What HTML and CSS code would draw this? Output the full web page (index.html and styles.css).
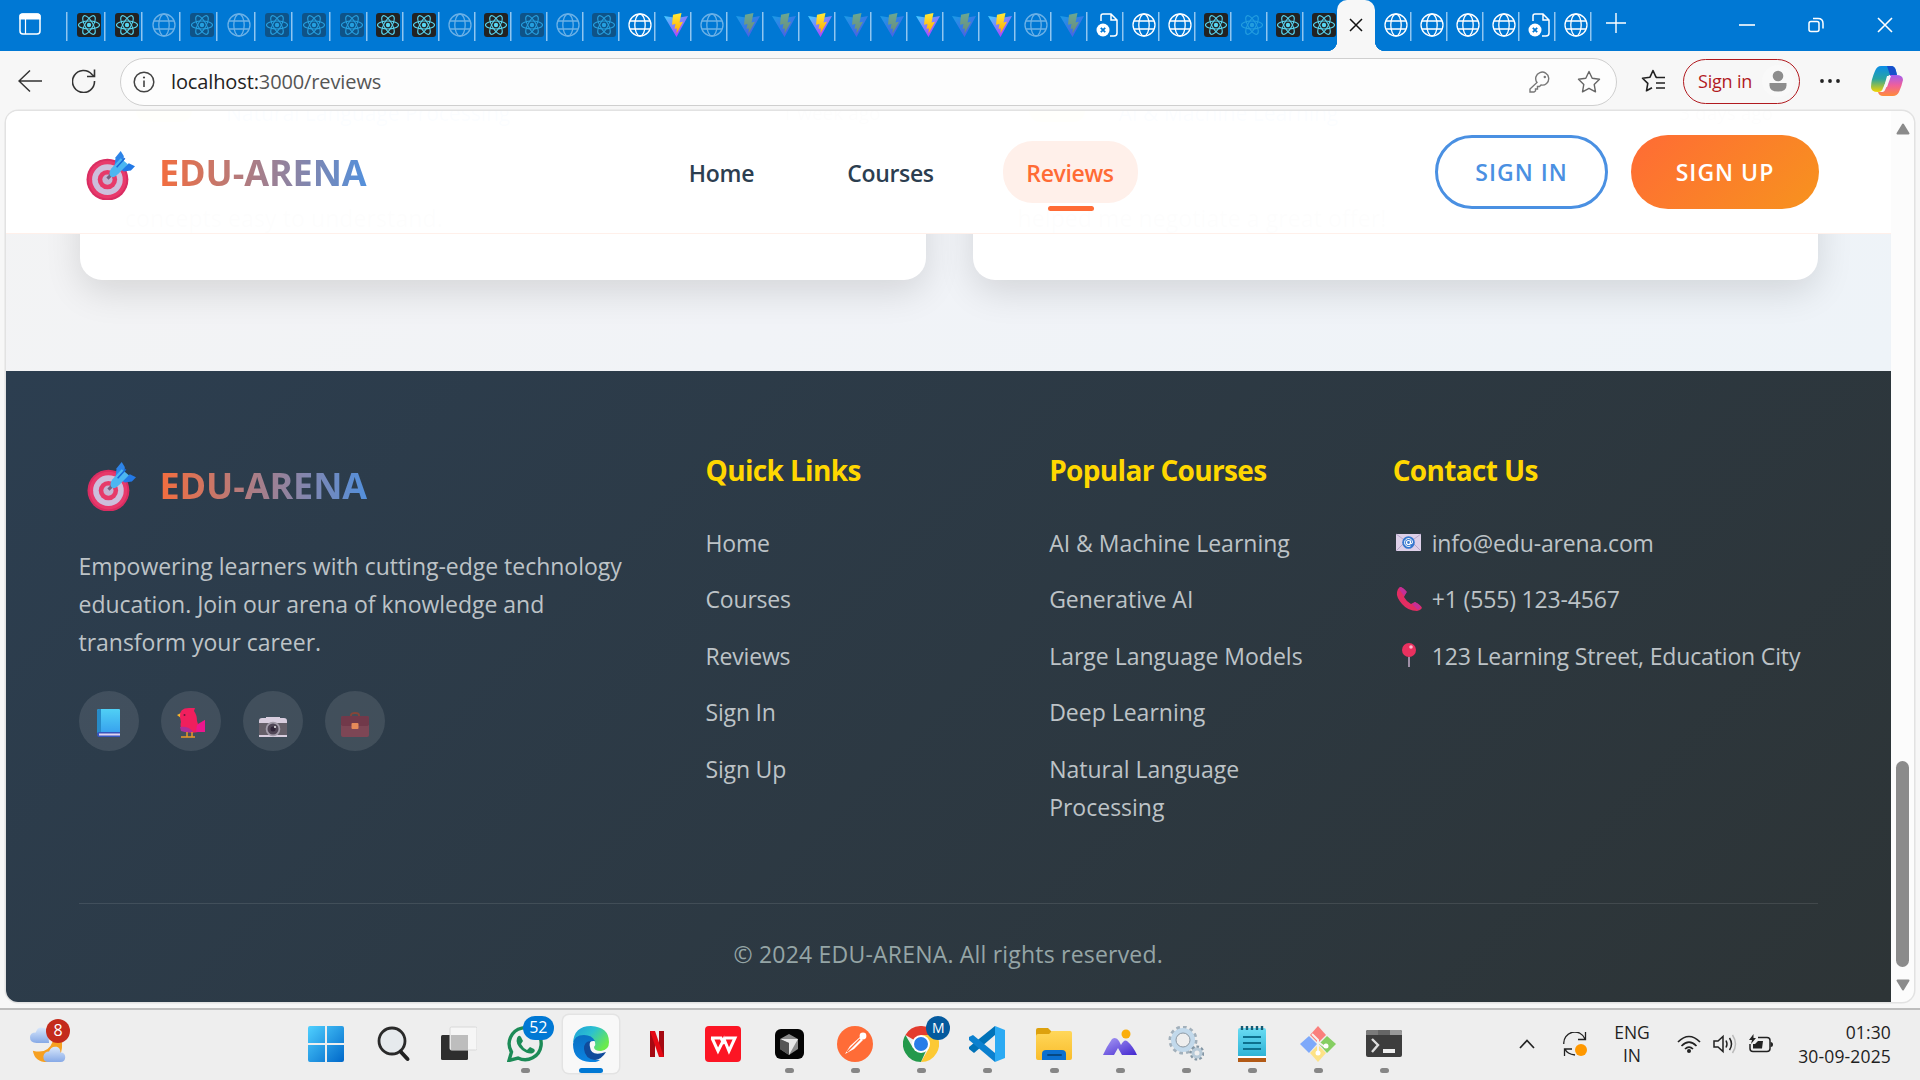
FILE: index.html
```html
<!DOCTYPE html>
<html lang="en">
<head>
<meta charset="utf-8">
<title>EDU-ARENA Reviews</title>
<link rel="stylesheet" href="styles.css">
</head>
<body>
<svg class="defs" width="0" height="0" aria-hidden="true">
  <defs>
    <linearGradient id="vite-a" x1="0" y1="0" x2=".7" y2="1"><stop offset="0" stop-color="#41d1ff"/><stop offset="1" stop-color="#bd34fe"/></linearGradient>
    <linearGradient id="vite-b" x1="0" y1="0" x2="0" y2="1"><stop offset="0" stop-color="#ffea3a"/><stop offset="1" stop-color="#ffa800"/></linearGradient>
    <linearGradient id="win" x1="0" y1="0" x2="1" y2="1"><stop offset="0" stop-color="#4fd0ff"/><stop offset="1" stop-color="#0067c9"/></linearGradient>
    <linearGradient id="edge-a" x1="0" y1="0" x2="1" y2=".6"><stop offset="0" stop-color="#1d9ddb"/><stop offset=".5" stop-color="#2cc1cf"/><stop offset="1" stop-color="#6bea4c"/></linearGradient>
    <linearGradient id="edge-b" x1="0" y1="0" x2="0" y2="1"><stop offset="0" stop-color="#0a6fc2"/><stop offset="1" stop-color="#0b84e2"/></linearGradient>
    <linearGradient id="cop-a" x1="0" y1="0" x2="0" y2="1"><stop offset="0" stop-color="#0a8de8"/><stop offset=".5" stop-color="#2aa5a0"/><stop offset="1" stop-color="#f5d400"/></linearGradient>
    <linearGradient id="cop-b" x1="0" y1="0" x2="0" y2="1"><stop offset="0" stop-color="#a35cf0"/><stop offset=".5" stop-color="#f0609a"/><stop offset="1" stop-color="#ff8c3a"/></linearGradient>
    <linearGradient id="folder" x1="0" y1="0" x2="0" y2="1"><stop offset="0" stop-color="#ffd75a"/><stop offset="1" stop-color="#f9bd2c"/></linearGradient>
    <linearGradient id="book" x1="0" y1="0" x2="0" y2="1"><stop offset="0" stop-color="#50d0f5"/><stop offset="1" stop-color="#38a3ee"/></linearGradient>
    <linearGradient id="cloud" x1="0" y1="0" x2="0" y2="1"><stop offset="0" stop-color="#d9e8fc"/><stop offset="1" stop-color="#86a9e6"/></linearGradient>
    <linearGradient id="hill" x1="0" y1="0" x2="1" y2="1"><stop offset="0" stop-color="#a99cf5"/><stop offset="1" stop-color="#4327cf"/></linearGradient>
    <linearGradient id="note" x1="0" y1="0" x2="0" y2="1"><stop offset="0" stop-color="#69dcf3"/><stop offset="1" stop-color="#2ab0d4"/></linearGradient>

    <symbol id="react" viewBox="0 0 24 24"><g fill="none" stroke="currentColor" stroke-width="1.1"><ellipse cx="12" cy="12" rx="10.5" ry="4"/><ellipse cx="12" cy="12" rx="10.5" ry="4" transform="rotate(60 12 12)"/><ellipse cx="12" cy="12" rx="10.5" ry="4" transform="rotate(120 12 12)"/></g><circle cx="12" cy="12" r="2.2" fill="currentColor"/></symbol>
    <symbol id="globe" viewBox="0 0 24 24"><g fill="none" stroke="currentColor" stroke-width="1.3"><circle cx="12" cy="12" r="11"/><ellipse cx="12" cy="12" rx="5.2" ry="11"/><path d="M2 8h20M2 16h20"/></g></symbol>
    <symbol id="vite" viewBox="0 0 24 24"><path d="M0 3 12.5 24 24 3 13 5z" fill="url(#vite-a)"/><path d="M17.500 0 9 1.700 8 11.800l3.500-.8-1 5 2.300-.7-.3 5.200L19 8.800l-3.500.6z" fill="url(#vite-b)"/></symbol>
    <symbol id="file" viewBox="0 0 24 24"><path d="M5 8V3q0-2 2-2h8l6 6v13q0 3-3 3h-4M15 1v6h6" fill="none" stroke="#fff" stroke-width="1.5"/><circle cx="7" cy="17" r="6.500" fill="#fff"/><path d="m4.800 14.800 4.400 4.400m0-4.400-4.400 4.400" stroke="#0078d4" stroke-width="1.800"/></symbol>
    <symbol id="target" viewBox="0 0 48 48"><circle cx="21" cy="28" r="20.500" fill="#d92d62"/><circle cx="21" cy="28" r="18.500" fill="#e8396b"/><circle cx="21" cy="28" r="15" fill="#cdbfdc"/><circle cx="21" cy="28" r="9.500" fill="#e73a69"/><circle cx="21" cy="28" r="5" fill="#c4b5d3"/><path d="m21 27 6-6" stroke="#77617f" stroke-width="3"/><path d="m28 14 1-8 5-6 3 5v6l-5 7z" fill="#2d84e8"/><path d="m34 18 8-6 6 3-4 4-7 1z" fill="#2379e6"/><path d="M23.500 24q-1.500-3 1.500-7l9-10 7 6-9 9q-6 6-8.500 2z" fill="#4cb6f1"/><path d="m30 16 8-9" stroke="#1768d8" stroke-width="1.500"/></symbol>
  </defs>
</svg>

<div class="tabstrip">
  <svg class="workspace" viewBox="0 0 22 22"><rect x="1" y="1" width="20" height="20" rx="3" fill="none" stroke="#fff" stroke-width="1.500"/><path d="M1 6V3q0-2 2-2h16q2 0 2 2v3zM6.500 6v15" fill="#fff" stroke="#fff" stroke-width="1.200"/></svg>
  <div class="tabs">
    <div class="tab wide"><svg class="fav react"><use href="#react"/></svg></div>
    <div class="tab wide"><svg class="fav react"><use href="#react"/></svg></div>
    <div class="tab wide"><svg class="fav dim"><use href="#globe"/></svg></div>
    <div class="tab wide"><svg class="fav react dim"><use href="#react"/></svg></div>
    <div class="tab wide"><svg class="fav dim"><use href="#globe"/></svg></div>
    <div class="tab wide"><svg class="fav react dim"><use href="#react"/></svg></div>
    <div class="tab wide"><svg class="fav react dim"><use href="#react"/></svg></div>
    <div class="tab wide"><svg class="fav react dim"><use href="#react"/></svg></div>
    <div class="tab"><svg class="fav react"><use href="#react"/></svg></div>
    <div class="tab"><svg class="fav react"><use href="#react"/></svg></div>
    <div class="tab"><svg class="fav dim"><use href="#globe"/></svg></div>
    <div class="tab"><svg class="fav react"><use href="#react"/></svg></div>
    <div class="tab"><svg class="fav react dim"><use href="#react"/></svg></div>
    <div class="tab"><svg class="fav dim"><use href="#globe"/></svg></div>
    <div class="tab"><svg class="fav react dim"><use href="#react"/></svg></div>
    <div class="tab"><svg class="fav"><use href="#globe"/></svg></div>
    <div class="tab"><svg class="fav"><use href="#vite"/></svg></div>
    <div class="tab"><svg class="fav dim"><use href="#globe"/></svg></div>
    <div class="tab"><svg class="fav dim"><use href="#vite"/></svg></div>
    <div class="tab"><svg class="fav dim"><use href="#vite"/></svg></div>
    <div class="tab"><svg class="fav"><use href="#vite"/></svg></div>
    <div class="tab"><svg class="fav dim"><use href="#vite"/></svg></div>
    <div class="tab"><svg class="fav dim"><use href="#vite"/></svg></div>
    <div class="tab"><svg class="fav"><use href="#vite"/></svg></div>
    <div class="tab"><svg class="fav dim"><use href="#vite"/></svg></div>
    <div class="tab"><svg class="fav"><use href="#vite"/></svg></div>
    <div class="tab"><svg class="fav dim"><use href="#globe"/></svg></div>
    <div class="tab"><svg class="fav dim"><use href="#vite"/></svg></div>
    <div class="tab"><svg class="fav"><use href="#file"/></svg></div>
    <div class="tab"><svg class="fav"><use href="#globe"/></svg></div>
    <div class="tab"><svg class="fav"><use href="#globe"/></svg></div>
    <div class="tab"><svg class="fav react"><use href="#react"/></svg></div>
    <div class="tab"><svg class="fav react bare"><use href="#react"/></svg></div>
    <div class="tab"><svg class="fav react"><use href="#react"/></svg></div>
    <div class="tab"><svg class="fav react"><use href="#react"/></svg></div>
    <div class="tab active"><svg class="close" viewBox="0 0 14 14"><path d="m1 1 12 12M13 1 1 13" stroke="#111" stroke-width="1.500"/></svg></div>
    <div class="tab first"><svg class="fav"><use href="#globe"/></svg></div>
    <div class="tab"><svg class="fav"><use href="#globe"/></svg></div>
    <div class="tab"><svg class="fav"><use href="#globe"/></svg></div>
    <div class="tab"><svg class="fav"><use href="#globe"/></svg></div>
    <div class="tab"><svg class="fav"><use href="#file"/></svg></div>
    <div class="tab"><svg class="fav"><use href="#globe"/></svg></div>
    <div class="tab plus"><svg viewBox="0 0 20 20"><path d="M10 0v20M0 10h20" stroke="#fff" stroke-width="1.400"/></svg></div>
  </div>
  <div class="window-controls">
    <svg viewBox="0 0 16 16"><path d="M0 8h16" stroke="#fff" stroke-width="1.600"/></svg>
    <svg viewBox="0 0 16 16"><rect x="1" y="4.500" width="10" height="10" rx="2" fill="none" stroke="#fff" stroke-width="1.500"/><path d="M5 1.500h5q5 0 5 5v5" fill="none" stroke="#fff" stroke-width="1.500"/></svg>
    <svg viewBox="0 0 16 16"><path d="m1 1 14 14M15 1 1 15" stroke="#fff" stroke-width="1.600"/></svg>
  </div>
</div>

<div class="toolbar">
  <svg class="back" viewBox="0 0 24 24"><path d="M24 12H1M12 1.500 1 12l11 10.500" fill="none" stroke="#333" stroke-width="1.500"/></svg>
  <svg class="reload" viewBox="0 0 24 24"><path d="M22.500 12A11 11 0 1 1 20 5.500l2.500 2M22.500.5v7H15" fill="none" stroke="#333" stroke-width="1.600"/></svg>
  <div class="address">
    <svg class="info" viewBox="0 0 22 22"><circle cx="11" cy="11" r="9.800" fill="none" stroke="#444" stroke-width="1.500"/><path d="M11 9.500v6.500" stroke="#444" stroke-width="1.600"/><circle cx="11" cy="6.500" r="1.100" fill="#444"/></svg>
    <span class="url">localhost:<i>3000/reviews</i></span>
    <svg class="key" viewBox="0 0 22 22"><path d="M8 11.500A6.500 6.500 0 1 1 12 14l-1.500 1.500H8.500v2.500H6.500V20L5 21H1v-3z" fill="none" stroke="#777" stroke-width="1.400"/><circle cx="15.800" cy="6" r="1.200" fill="#777"/></svg>
    <svg class="star" viewBox="0 0 24 24"><path d="m12 1.500 3.200 6.700 7.300 1-5.300 5.200 1.300 7.400L12 18.300l-6.500 3.500 1.300-7.400L1.500 9.200l7.300-1z" fill="none" stroke="#666" stroke-width="1.400" stroke-linejoin="round"/></svg>
  </div>
  <svg class="favorites" viewBox="0 0 25 24"><path d="M16 8.200h-1L12 1.500 9 8.200l-7.500 1 5.300 5.200-1.300 7.400L11 18.800M15 8.500h9M15 14h9M15 19h9" fill="none" stroke="#222" stroke-width="1.600" stroke-linejoin="round"/></svg>
  <div class="signin-chip"><span>Sign in</span><svg viewBox="0 0 32 32"><circle cx="16" cy="16" r="16" fill="#f9f9f9"/><circle cx="16" cy="11" r="5.300" fill="#8d8d8d"/><path d="M7.500 18h17v2.500q0 6-8.500 6t-8.500-6z" fill="#8d8d8d"/></svg></div>
  <svg class="dots" viewBox="0 0 20 4"><circle cx="2" cy="2" r="1.900"/><circle cx="10" cy="2" r="1.900"/><circle cx="18" cy="2" r="1.900"/></svg>
  <svg class="copilot" viewBox="0 0 34 32"><path d="M11 1h10q4 0 5 5l1 4h-8l-6 13q-1 4-5 4-7 0-7-5Q1 15 5 6q2-5 6-5z" fill="url(#cop-a)"/><path d="M17 1h4q4 0 5 5l1 4h-7z" fill="#174fcb"/><path d="M23 31H13q-4 0-5-4h5q2-1 3-4l4-13h6q7 0 7 5-1 5-4 12-2 4-6 4z" fill="url(#cop-b)"/><path d="m17 11-3 11h3l4-11z" fill="#f7f7f7"/></svg>
</div>

<div class="viewport">
  <div class="page">
    <header class="site-header">
      <div class="logo"><svg class="target"><use href="#target"/></svg><span>EDU-ARENA</span></div>
      <nav class="nav">
        <a class="w-home">Home</a><a>Courses</a><a class="current">Reviews</a>
      </nav>
      <div class="auth"><a class="btn outline">SIGN IN</a><a class="btn solid">SIGN UP</a></div>
    </header>
    <section class="reviews">
      <article class="card">
        <div class="who"><i class="avatar"></i><span class="course">Natural Language Processing</span><span class="when">1 week ago</span></div>
        <p>concepts easy to understand.</p>
      </article>
      <article class="card">
        <div class="who"><i class="avatar"></i><span class="course">AI &amp; Machine Learning</span><span class="when">3 days ago</span></div>
        <p>helped me negotiate a great offer!</p>
      </article>
    </section>
    <footer class="footer">
      <div class="columns">
        <div class="about">
          <div class="logo"><svg class="target"><use href="#target"/></svg><span>EDU-ARENA</span></div>
          <p>Empowering learners with cutting-edge technology<br>education. Join our arena of knowledge and<br>transform your career.</p>
          <div class="social">
            <a><svg viewBox="0 0 30 30"><path d="M3 3q0-2 2-2h20q1 0 1 1v22H3z" fill="url(#book)"/><path d="M3 3q0-2 2-2h2v24H3z" fill="#278bc8"/><path d="M3 26q0-2 2-2h21v5H5q-2 0-2-3z" fill="#3656bd"/><path d="M5 25.500h21v2H5z" fill="#e3d3ef"/></svg></a>
            <a><svg viewBox="0 0 30 30"><path d="M5 5 1 7l4 3z" fill="#fbb52b"/><path d="M4 9q-1-9 9-9h6l-1 3q3 4 3 10l1 3 7-4v12h-7q-8 2-14-1-5-4-3-9z" fill="#f01f5d"/><path d="M4 19q9-1 13 5-7 1-12-1z" fill="#ad2d9a"/><path d="m21 17 8-5v12h-9z" fill="#ed168d"/><circle cx="8.500" cy="7" r="1" fill="#6d1540"/><path d="M11 24v5m5-5v5M5 29h14" stroke="#e79a28" stroke-width="1.500"/></svg></a>
            <a><svg viewBox="0 0 30 30"><path d="M4 11h4v-2h14v2h4q3 0 3 3v15H1V14q0-3 3-3z" fill="#655f69"/><path d="M1 15v-2q0-3 3-3h4V9h14v1h4q3 0 3 3v2zM1 27h28v2H1z" fill="#d8cdde"/><circle cx="15" cy="21" r="7.300" fill="#a29ba9"/><circle cx="15" cy="21" r="5.500" fill="#504656"/><circle cx="15" cy="21" r="2.500" fill="#302438"/><circle cx="17" cy="19" r="1" fill="#eee"/></svg></a>
            <a><svg viewBox="0 0 30 30"><path d="M11 9V7q0-2 4-2t4 2v2" fill="none" stroke="#874538" stroke-width="1.800"/><rect x="1" y="8" width="28" height="21" rx="2" fill="#7d4655"/><path d="M1 10q0-2 2-2h24q2 0 2 2v6q0 2-3 2H4q-3 0-3-2z" fill="#71394a"/><rect x="11.500" y="15" width="7" height="6" rx="1" fill="#e58a59"/></svg></a>
          </div>
        </div>
        <div>
          <h4>Quick Links</h4>
          <ul><li>Home</li><li>Courses</li><li>Reviews</li><li>Sign In</li><li>Sign Up</li></ul>
        </div>
        <div>
          <h4>Popular Courses</h4>
          <ul class="courses"><li>AI &amp; Machine Learning</li><li>Generative AI</li><li>Large Language Models</li><li>Deep Learning</li><li>Natural Language<br>Processing</li></ul>
        </div>
        <div>
          <h4>Contact Us</h4>
          <ul class="contact">
            <li><svg viewBox="0 0 32 32"><rect x="4" y="7" width="25" height="17" fill="#ddd0e9"/><path d="m4 7 12.500 9L29 7M4 24l9-9m16 9-9-9" stroke="#b9a8cc" fill="none"/><circle cx="16.500" cy="15.500" r="6.300" fill="#3678cf"/><circle cx="16.500" cy="15.500" r="2" fill="none" stroke="#fff" stroke-width="1.200"/><path d="M18.500 13.500v3q2 1 2-1.500a4 4 0 1 0-2 4" fill="none" stroke="#fff"/></svg>info@edu-arena.com</li>
            <li><svg viewBox="0 0 32 32"><path d="M8 4q3 0 6 6l-2 4q2 4 7 7l4-2q6 3 7 6-2 3-5 3-9 0-15-7T5 9q0-3 3-5z" fill="#e32d62"/><path d="m23 19-3 2 6 6 3-3q-2-3-6-5zM8 4 7 6l5 7 3-4q-4-5-7-5z" fill="#c52f96"/></svg>+1 (555) 123-4567</li>
            <li><svg viewBox="0 0 32 32"><path d="M17 17v10" stroke="#9e8fa6" stroke-width="2"/><circle cx="17" cy="10" r="7" fill="#ea315f"/><circle cx="19" cy="7" r="1.800" fill="#ffb7cb"/></svg>123 Learning Street, Education City</li>
          </ul>
        </div>
      </div>
      <div class="legal">© 2024 EDU-ARENA. All rights reserved.</div>
    </footer>
  </div>
  <div class="scrollbar"><svg viewBox="0 0 14 12"><path d="M7 1.500 12.500 10.500h-11z" fill="#8b8b8b" stroke="#8b8b8b" stroke-width="2" stroke-linejoin="round"/></svg><i></i><svg class="down" viewBox="0 0 14 12"><path d="M7 10.500 1.500 1.500h11z" fill="#8b8b8b" stroke="#8b8b8b" stroke-width="2" stroke-linejoin="round"/></svg></div>
</div>

<div class="taskbar">
  <div class="weather">
    <svg viewBox="0 0 42 42"><path d="M33 16q4 21-15 24-13 0-15-12 16 4 21-10 4-4 9-2z" fill="#f6a021"/><path d="M7 20q-7 0-7-6 0-5 6-5 2-7 8-5 5 1 5 6l1 10z" fill="url(#cloud)"/><path d="M19 40q-5 0-5-6 1-5 6-5 2-6 8-5 4 1 4 6 5 0 5 5t-5 5z" fill="url(#cloud)"/></svg>
    <b class="badge red">8</b>
  </div>
  <div class="apps">
    <div class="app"><svg viewBox="0 0 36 36"><path d="M2 0h15v17H0V2q0-2 2-2zm17 0h15q2 0 2 2v15H19zM0 19h17v17H2q-2 0-2-2zm19 0h17v15q0 2-2 2H19z" fill="url(#win)"/></svg></div>
    <div class="app"><svg viewBox="0 0 36 36"><circle cx="17" cy="15" r="13" fill="#e6eaed" stroke="#2a2a2a" stroke-width="2.800"/><path d="m25.500 25.500 7 7.500" stroke="#222" stroke-width="4" stroke-linecap="round"/></svg></div>
    <div class="app"><svg viewBox="0 0 36 36"><rect x="0" y="9" width="27" height="25" rx="1.500" fill="#2e2e2e"/><rect x="9" y="1" width="27" height="23" rx="1.500" fill="#f6f6f6" stroke="#d8d8d8"/><path d="M10 9h17v15H10z" fill="#bdbdbd"/></svg></div>
    <div class="app run"><svg viewBox="0 0 36 36"><path d="M2 34.500 4.500 26A16 16 0 1 1 11 32z" fill="#eee" stroke="#1c8b57" stroke-width="3.400"/><path d="M10 12q2-4 4-1l2 4-2 3q2 4 6 6l3-3 4 2q2 2-1 4-4 2-11-3-7-6-5-12z" fill="#1c8b57"/></svg><b class="badge blue">52</b></div>
    <div class="app run focus"><svg viewBox="0 0 36 36"><path d="M0 17Q1 0 18 0q18 1 18 16 0 8-8 9-7 0-7-4 2-2 1-5-3-6-11-6Q4 10 0 17z" fill="url(#edge-a)"/><path d="M0 18q1-9 11-9 8 0 11 6-8-1-8 7 0 12 13 12-4 3-10 2Q0 35 0 18z" fill="url(#edge-b)"/><path d="M18 15q-7 0-7 8 1 10 11 11 7-1 11-8-15 5-16-5-1-4 1-6z" fill="#104b9b"/></svg></div>
    <div class="app"><svg viewBox="0 0 36 36"><path d="M11 5h5v26h-5zM20 5h5v26h-5z" fill="#a50912"/><path d="M11 5h5l9 26h-5z" fill="#e50914"/></svg></div>
    <div class="app"><svg viewBox="0 0 36 36"><rect width="36" height="36" rx="4" fill="#fc1524"/><path d="M6 12h10l3 6M7 12l6 13 6-12 5 12 6-13H20" fill="none" stroke="#fff" stroke-width="3"/></svg></div>
    <div class="app run"><svg viewBox="0 0 36 36"><rect x="4" y="3" width="29" height="30" rx="6" fill="#050505"/><path d="m18 8 9 5v10l-9 6-9-6V13z" fill="#8b8b8b"/><path d="M9 13h18L18 29V17z" fill="#e8e8e8"/><path d="m9 13 9 4v12l-9-6z" fill="#555"/></svg></div>
    <div class="app run"><svg viewBox="0 0 36 36"><circle cx="18" cy="18" r="18" fill="#ff6c37"/><path d="m8 28 5-8 10-9 3 3-9 9-9 5z" fill="#fff"/><path d="m10 26 13-13" stroke="#ff6c37" stroke-width="1.200"/><circle cx="26" cy="10" r="3.400" fill="#fff"/></svg></div>
    <div class="app run"><svg viewBox="0 0 36 36"><path d="M18 18 2.400 9A18 18 0 0 1 33.600 9z" fill="#e33b2e"/><path d="M18 18h8L18 36A18 18 0 0 1 2.400 9L10 22z" fill="#23994b"/><path d="M18 9h15.600A18 18 0 0 1 18 36l8-14z" fill="#fcc934"/><circle cx="18" cy="18" r="9" fill="#fff"/><circle cx="18" cy="18" r="7" fill="#297de8"/></svg><b class="badge navy">M</b></div>
    <div class="app run"><svg viewBox="0 0 36 36"><path d="M26 0v9L5 27l-5-4v-2z" fill="#0072b8"/><path d="M0 13v-2l4-2 22 18v9L0 14z" fill="#0b80cf"/><path d="m26 0 10 4v28l-10 4z" fill="#2caaf3"/></svg></div>
    <div class="app run"><svg viewBox="0 0 36 36"><path d="M0 4q0-2 2-2h10l4 4v6H0z" fill="#dda10d"/><path d="M0 10q0-2 2-2h11l3-3h18q2 0 2 2v25q0 2-2 2H2q-2 0-2-2z" fill="url(#folder)"/><path d="M6 34V28q0-4 4-4h16q4 0 4 4v6z" fill="#0c70cf"/><path d="M12 29h13" stroke="#064883" stroke-width="2" stroke-linecap="round"/></svg></div>
    <div class="app run"><svg viewBox="0 0 36 36"><circle cx="24" cy="8" r="4.500" fill="#faae0a"/><path d="M1 29q4-9 9-16 4-3 7 2l2 4q3-6 6-4 6 5 10 14H20l-4-7-4 7z" fill="url(#hill)"/></svg></div>
    <div class="app run"><svg viewBox="0 0 36 36"><circle cx="15" cy="14" r="12.500" fill="none" stroke="#a2b0bb" stroke-width="4" stroke-dasharray="3.500 3"/><circle cx="15" cy="14" r="9.500" fill="none" stroke="#c2d9eb" stroke-width="5"/><circle cx="15" cy="14" r="7" fill="#eee" stroke="#8a98a4" stroke-width="1"/><circle cx="29" cy="27" r="6" fill="none" stroke="#8496a4" stroke-width="3" stroke-dasharray="2.500 2"/><circle cx="29" cy="27" r="4" fill="#eee" stroke="#b7cad8" stroke-width="3"/></svg></div>
    <div class="app run"><svg viewBox="0 0 36 36"><rect x="4" y="2" width="28" height="30" rx="2" fill="url(#note)"/><path d="M4 31h28v5H4z" fill="#b25a16"/><path d="M4 30h28v2H4z" fill="#fff"/><path d="M8 0v4m5-4v4m5-4v4m5-4v4m5-4v4" stroke="#155a73" stroke-width="2.400"/><path d="M9 11h18M9 17h18M9 23h18" stroke="#0d708e" stroke-width="1.800"/></svg></div>
    <div class="app run"><svg viewBox="0 0 36 36"><path d="m18 0 8 9-8 8-8-8z" fill="#fa7f7c"/><path d="m9 10 8 8-8 9-9-9z" fill="#7ea9fa"/><path d="m27 10 9 8-9 9-8-9z" fill="#85ce62"/><path d="m18 19 8 8-8 9-8-9z" fill="#fde286"/><path d="m12 8 6 6v14m0-12 7 5" stroke="#f4f1ef" stroke-width="2" fill="none"/><circle cx="18" cy="27" r="2.500" fill="#fff"/><circle cx="26" cy="20" r="2.500" fill="#fff"/></svg></div>
    <div class="app run"><svg viewBox="0 0 36 36"><rect x="0" y="4" width="36" height="27" rx="2" fill="#3d3d3d"/><path d="M0 9V6q0-2 2-2h10v5z" fill="#7b7b7b"/><path d="M12 4h12v5H12z" fill="#666"/><path d="M24 4h10q2 0 2 2v3H24z" fill="#999"/><path d="m6 13 6 6-6 7" fill="none" stroke="#ddd" stroke-width="2.400"/><path d="M17 23h12v4H17z" fill="#eee"/></svg></div>
  </div>
  <div class="tray">
    <svg class="chev" viewBox="0 0 16 10"><path d="m1 9 7-7.500L15 9" fill="none" stroke="#222" stroke-width="1.700"/></svg>
    <svg class="sync" viewBox="0 0 24 24"><path d="M.8 12A11 11 0 0 1 22 7M22.500 0v7.500H15M2 17q2 5 10 6M1.500 24v-7H9" fill="none" stroke="#222" stroke-width="1.300"/><circle cx="18" cy="18" r="6" fill="#ff9800"/></svg>
    <div class="lang">ENG<br>IN</div>
    <svg class="wifi" viewBox="0 0 24 18"><path d="M1 7q11-11 22 0M4.500 11q7.500-7.500 15 0M8 14q4-4 8 0" fill="none" stroke="#222" stroke-width="1.700"/><circle cx="12" cy="16" r="2" fill="#222"/></svg>
    <svg class="vol" viewBox="0 0 24 20"><path d="M1 7v6h4l5 4.500v-15L5 7zM13 6.500q2 3.500 0 7M16.500 4q4 6 0 12" fill="none" stroke="#222" stroke-width="1.500"/><path d="M19.500 1q6 9 0 18" fill="none" stroke="#bbb" stroke-width="1.500"/></svg>
    <svg class="bat" viewBox="0 0 24 20"><path d="M9 3.500h9q3 0 3 3v8q0 3-3 3H4q-3 0-3-3V10" fill="none" stroke="#222" stroke-width="1.500"/><path d="M9 7h5l-1 7.500H4V10h2zM21.500 8q2.500 0 2.500 2.500T21.500 13zM4.500 0 0 6h3L2 10l5-6H4.500z" fill="#222"/></svg>
    <div class="clock">01:30<br>30-09-2025</div>
  </div>
</div>
</body>
</html>
```
FILE: styles.css
```css
* { box-sizing: border-box; }
body {
  margin: 0; width: 1920px; height: 1080px; overflow: hidden;
  display: flex; flex-direction: column; background: #f7f7f7;
  font-family: "Open Sans", "Noto Sans", sans-serif;
}
svg { display: block; flex: none; }
.defs { height: 0; }

/* browser tab strip */
.tabstrip { height: 51px; flex: none; display: flex; background: #0078d4; }
.workspace { width: 22px; height: 22px; margin: 13px 0 0 19px; }
.tabs { display: flex; margin-left: 25px; height: 51px; }
.tab { width: 36px; padding: 13px 0 0 10.5px; color: #fff; background: linear-gradient(#8fc5f0, #8fc5f0) 0 12px / 1.500px 29px no-repeat; }
.tab.wide { width: 37.5px; padding-left: 11px; }
.tab:nth-child(n + 9) { padding-left: 10px; }
.fav { width: 24px; height: 24px; }
.fav.react { background: #222; border-radius: 3px; color: #58d5f0; }
.fav.dim { opacity: .42; }
.fav.bare { background: none; opacity: .4; }
.tab.active { position: relative; width: 38px; margin: 0 -1px; padding: 18px 0 0 12px; background: #f7f7f7; border-radius: 10px 10px 0 0; }
.tab.active::before, .tab.active::after { content: ""; position: absolute; bottom: 0; width: 10px; height: 10px; }
.tab.active::before { left: -10px; background: radial-gradient(circle at 0 0, transparent 10px, #f7f7f7 10.5px); }
.tab.active::after { right: -10px; background: radial-gradient(circle at 100% 0, transparent 10px, #f7f7f7 10.5px); }
.close { width: 14px; height: 14px; }
.tab.first { background: none; }
.tab.plus { padding: 13px 0 0 16px; width: 40px; }
.plus svg { width: 20px; height: 20px; }
.window-controls { display: flex; gap: 53px; margin: 17px 0 0 auto; padding-right: 27px; }
.window-controls svg { width: 16px; height: 16px; }

/* browser toolbar */
.toolbar { height: 60px; flex: none; display: flex; align-items: center; padding-left: 18px; }
.back { width: 24px; height: 24px; }
.reload { width: 24px; height: 24px; margin-left: 30px; }
.address { width: 1497px; height: 48px; margin-left: 24px; margin-top: 1px; display: flex; align-items: center; background: #fdfdfd; border: 1.500px solid #cfcfcf; border-radius: 24px; padding: 0 15px 0 12px; }
.info { width: 22px; height: 22px; }
.url { margin-left: 16px; font-size: 20px; letter-spacing: -.12px; color: #222; line-height: 28px; }
.url i { font-style: normal; color: #555; }
.key { width: 22px; height: 22px; margin-left: auto; }
.star { width: 24px; height: 24px; margin-left: 26px; }
.favorites { width: 25px; height: 24px; margin-left: 24px; }
.signin-chip { width: 117px; height: 45px; margin-left: 17px; display: flex; align-items: center; border: 1.500px solid #b11a1f; border-radius: 23px; padding-left: 14px; color: #b11a1f; font-size: 18px; letter-spacing: -.2px; }
.signin-chip svg { width: 32px; height: 32px; margin-left: auto; margin-right: 5px; }
.dots { width: 20px; height: 4px; margin-left: 20px; fill: #222; }
.copilot { width: 34px; height: 32px; margin-left: 30px; }

/* page viewport */
.viewport { width: 1908px; height: 891px; flex: none; margin-left: 6px; display: flex; background: #fcfcfc; border-radius: 12px; overflow: hidden; box-shadow: 0 0 0 1.500px #e2e2e2; }
.page { position: relative; width: 1885px; height: 891px; display: flex; flex-direction: column; overflow: hidden; }
.site-header { position: absolute; inset: 0 0 auto 0; z-index: 2; height: 123px; display: grid; grid-template-columns: 586.5px auto 1fr; align-items: center; padding: 0 72px; background: rgba(255, 255, 255, .98); border-bottom: 1.500px solid #fff0ea; }
.logo { display: flex; align-items: center; }
.target { width: 49px; height: 49px; margin-left: 8px; overflow: visible; }
.logo span { margin-left: 24px; font-size: 36px; line-height: 58px; font-weight: 700; letter-spacing: -.1px; color: transparent; background: linear-gradient(90deg, #f46d3e, #5390dc); background-clip: text; -webkit-background-clip: text; }
.site-header .logo { padding-top: 2px; }
.site-header .target { margin-top: 4px; }
.nav { display: flex; gap: 45px; }
.nav a { position: relative; width: 134px; height: 62px; line-height: 65px; text-align: center; font-size: 23px; font-weight: 600; letter-spacing: -.35px; color: #2c3e50; border-radius: 30px; }
.nav .w-home { width: 114px; letter-spacing: -.2px; }
.nav .current { width: 135px; color: #ff6b35; background: #fff0ea; }
.nav .current::after { content: ""; position: absolute; left: 45px; bottom: -8px; width: 46px; height: 5px; border-radius: 3px; background: #ff6b35; }
.auth { display: flex; gap: 23px; justify-content: flex-end; }
.btn { height: 74px; line-height: 75px; text-align: center; border-radius: 37px; font-size: 23px; font-weight: 600; letter-spacing: 1px; }
.outline { width: 173px; border: 3px solid #4a90e2; line-height: 69px; color: #4a90e2; }
.solid { width: 188px; color: #fff; background: linear-gradient(135deg, #ff6b35, #f7931e); }

.reviews { height: 260px; flex: none; display: flex; gap: 47px; align-items: flex-start; padding: 0 73px 0 74px; background: linear-gradient(135deg, #f3f3f4, #f1f3f7 45%, #eef3f8); }
.card { flex: 1; height: 169px; background: #fff; border-radius: 0 0 22px 22px; box-shadow: 0 12px 36px rgba(0, 0, 0, .12); padding: 0 45px; }
.who { height: 60px; display: flex; }
.avatar { width: 56px; height: 11px; margin-left: 11px; border-radius: 0 0 28px 28px; background: #ffe27a; }
.course { margin: -12px 0 0 34px; font-size: 21px; line-height: 28px; color: #4a90e2; white-space: nowrap; }
.when { margin: -12px 0 0 auto; font-size: 19px; line-height: 28px; color: #999; }
.card p { margin: 30px 0 0; font-size: 23px; line-height: 34px; letter-spacing: .1px; color: #999; }

/* footer */
.footer { flex: 1; padding: 76px 73px 0 72.5px; background: linear-gradient(135deg, #2c3e50, #2d3436); color: #bdc3c7; font-size: 23px; line-height: 38px; letter-spacing: -.2px; }
.columns { display: grid; grid-template-columns: 2fr 1fr 1fr 1.5fr; gap: 60px; height: 456px; }
.columns > div { min-width: 0; white-space: nowrap; }
.about .logo { margin-top: 10px; height: 58px; }
.about .logo .target { margin-top: 1px; }
.about p { margin: 32px 0 0; letter-spacing: -.02px; }
.social { display: flex; gap: 22.3px; margin-top: 30px; }
.social a { width: 60px; height: 60px; border-radius: 50%; background: rgba(255, 255, 255, .1); display: flex; justify-content: center; align-items: center; }
.social svg { width: 30px; height: 30px; margin-top: 3px; }
h4 { margin: 0 0 30.5px; font-size: 28px; line-height: 46px; font-weight: 700; letter-spacing: -.65px; color: #ffd700; }
ul { list-style: none; margin: 0; padding: 0; display: flex; flex-direction: column; gap: 18.5px; }
.courses { letter-spacing: 0; }
.contact { letter-spacing: -.15px; }
.contact li { display: flex; align-items: center; }
.contact svg { width: 32px; height: 32px; margin: 0 8px 0 -1px; }
.legal { border-top: 1px solid rgba(255, 255, 255, .1); padding-top: 31px; text-align: center; color: #95a5a6; letter-spacing: .2px; }

.scrollbar { width: 23px; display: flex; flex-direction: column; align-items: center; padding-top: 12px; }
.scrollbar svg { width: 14px; height: 12px; }
.scrollbar i { width: 13px; height: 206px; margin-top: 626px; border-radius: 7px; background: #8b8b8b; }
.scrollbar .down { margin-top: 12px; }

/* desktop taskbar */
.taskbar { margin-top: 6px; flex: 1; display: flex; background: #eee; border-top: 2px solid #bdbdbd; color: #1f1f1f; }
.weather { position: relative; width: 42px; margin: 13px 0 0 30px; }
.weather svg { width: 40px; height: 42px; }
.badge { position: absolute; height: 24px; border-radius: 12px; color: #fff; font-size: 16px; line-height: 23px; text-align: center; font-weight: 400; }
.red { left: 16px; top: -4px; width: 24px; background: #c42b1c; }
.blue { right: -1px; width: 31px; background: #0078d4; }
.navy { right: -1px; width: 24px; background: #045a9e; font-size: 14px; }
.apps { display: flex; gap: 10.1px; margin-left: 225.5px; }
.app { position: relative; width: 56px; height: 58px; margin-top: 5px; padding: 11px 10px; border-radius: 6px; }
.app:nth-child(n + 2) { left: 1px; }
.app > svg { width: 36px; height: 36px; }
.app .badge { top: 4px; }
.run::after { content: ""; position: absolute; left: 24px; bottom: 0; width: 9px; height: 5px; border-radius: 3px; background: #868686; }
.focus { background: #f8f8f8; box-shadow: 0 0 0 1.500px #e3e3e3; }
.focus::after { left: 16px; width: 24px; background: #0078d4; }
.tray { display: flex; align-items: center; margin-left: auto; padding: 0 29px 3px 0; font-size: 17.5px; line-height: 23px; letter-spacing: 0; }
.chev { width: 16px; height: 10px; }
.sync { width: 24px; height: 24px; margin-left: 28px; }
.lang { width: 50px; margin-left: 20px; text-align: center; }
.wifi { width: 24px; height: 18px; margin-left: 20px; }
.vol { width: 24px; height: 20px; margin-left: 12px; }
.bat { width: 24px; height: 20px; margin-left: 12px; }
.clock { width: 100px; margin-left: 18px; text-align: right; line-height: 24px; letter-spacing: .15px; }
.app .badge { top: 1px; }
```
